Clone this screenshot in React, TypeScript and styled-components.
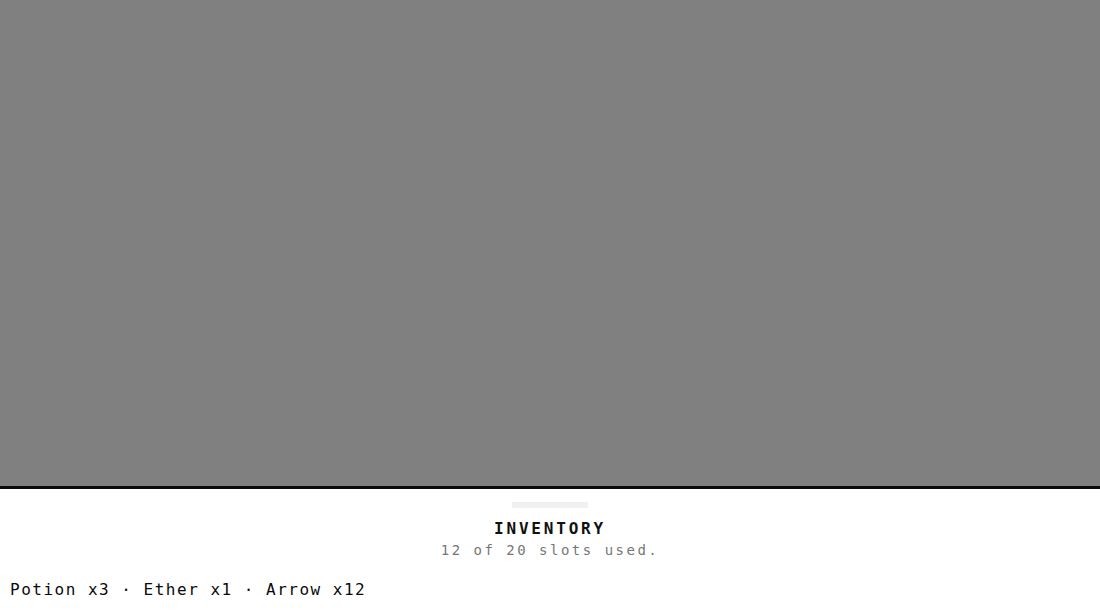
import React from 'react';
import styled, { createGlobalStyle } from 'styled-components';

const GlobalStyle = createGlobalStyle`
  html, body, #root {
    margin: 0;
    padding: 0;
    height: 100%;
  }
  body {
    background: #ffffff;
    font-family: "DejaVu Sans Mono", "Liberation Mono", monospace;
    color: #111;
  }
`;

const Screen = styled.div`
  display: flex;
  flex-direction: column;
  height: 100vh;
  overflow: hidden;
`;

const Backdrop = styled.div`
  flex: 1;
  background: #808080;
`;

const Sheet = styled.div`
  box-sizing: border-box;
  flex: 0 0 125px;
  border-top: 3px solid #0a0a0a;
  background: #ffffff;
  padding: 13px 10px 0;
  display: flex;
  flex-direction: column;
`;

const Handle = styled.div`
  align-self: center;
  width: 76px;
  height: 6px;
  background: #f0f0f0;
`;

const Title = styled.h2`
  margin: 10px 0 0;
  text-align: center;
  font-size: 16px;
  font-weight: bold;
  line-height: 22px;
  letter-spacing: 2.8px;
  color: #111;
`;

const Subtitle = styled.p`
  margin: 1px 0 0;
  text-align: center;
  font-size: 14px;
  line-height: 18px;
  letter-spacing: 2.5px;
  color: #777;
`;

const ItemLine = styled.div`
  margin-top: 21px;
  font-size: 16px;
  line-height: 20px;
  letter-spacing: 1.5px;
  color: #0a0a0a;
  white-space: nowrap;
`;

interface Item {
  name: string;
  count: number;
}

const items: Item[] = [
  { name: 'Potion', count: 3 },
  { name: 'Ether', count: 1 },
  { name: 'Arrow', count: 12 },
];

const App: React.FC = () => {
  const used = items.reduce((n, i) => n + i.count, 0) - 4;
  return (
    <>
      <GlobalStyle />
      <Screen>
        <Backdrop />
        <Sheet>
          <Handle />
          <Title>INVENTORY</Title>
          <Subtitle>{used} of 20 slots used.</Subtitle>
          <ItemLine>
            {items.map(i => `${i.name} x${i.count}`).join(' · ')}
          </ItemLine>
        </Sheet>
      </Screen>
    </>
  );
};

export default App;
